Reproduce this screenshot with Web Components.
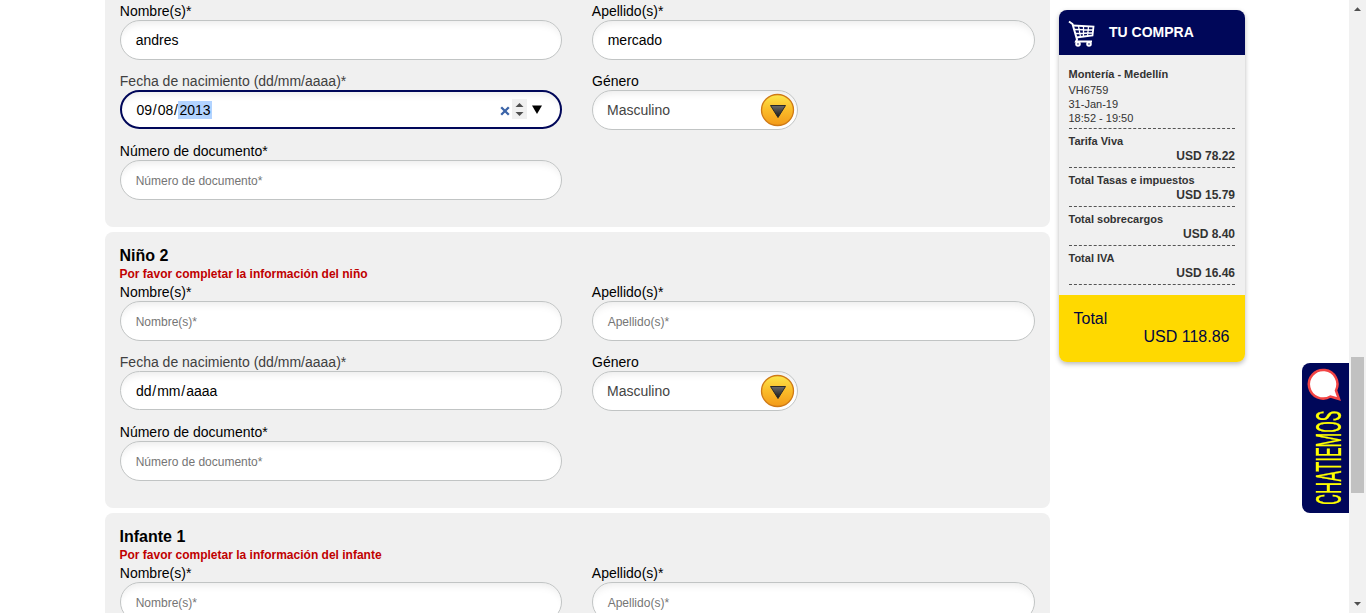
<!DOCTYPE html>
<html lang="es">
<head>
<meta charset="utf-8">
<title>Pasajeros</title>
<style>
html,body{margin:0;height:100%;overflow:hidden;background:#fff;font-family:"Liberation Sans",Arial,sans-serif;color:#000}
</style>
</head>
<body>
<booking-page></booking-page>
<script>
function define(name, html) {
  const tpl = document.createElement('template');
  tpl.innerHTML = html;
  customElements.define(name, class extends HTMLElement {
    constructor() {
      super();
      this.attachShadow({mode: 'open'}).appendChild(tpl.content.cloneNode(true));
    }
  });
}

define('form-field', `<style>
:host{display:block;height:70px;font-size:14px}
.label{padding-top:2px;height:18px;line-height:18px;white-space:nowrap;margin-left:-.2px}
.box{box-sizing:border-box;height:40px;border:1px solid #c1c4c4;border-radius:20px;background:#fff;box-shadow:inset 0 8px 8px -6px #e9e9e9;padding:0 14.7px;display:flex;align-items:center;font-size:14px;white-space:nowrap}
:host([hint]) .box{font-size:12px;color:#757575;padding-top:1px}
:host([date]) .box{height:39px;padding-bottom:0;padding-left:14px}
:host([date]) .label{color:#404040}
:host([focused]) .box{border:2px solid #000759;padding:0 13px 0 13.5px}
</style><div class="label"><slot name="label"></slot></div><div class="box"><slot></slot></div>`);

define('date-value', `<style>
:host{flex:1;display:flex;align-items:center;height:20px}
.t{flex:1;display:flex;align-items:center}
.t span{padding:0 .9px;line-height:18px}
.t .year{background:#b2d3ff;padding:0 1.4px}
svg{display:block}
.spin{background:#f0f0f0;margin:-2px 5px 0 2px}
.x{margin-top:2px}
.arrow{margin:-1px 5px 0 0}
</style><div class="t"><span>09</span>/<span>08</span>/<span class="year">2013</span></div>
<svg class="x" width="10" height="10" viewBox="0 0 10 10"><path d="M1.2 1.2L8.8 8.8M8.8 1.2L1.2 8.8" stroke="#3b64a8" stroke-width="2.3"/></svg>
<svg class="spin" width="15" height="20" viewBox="0 0 15 20"><path d="M3.5 8L7.5 4L11.5 8ZM3.5 13L7.5 17L11.5 13Z" fill="#505050"/></svg>
<svg class="arrow" width="10" height="9" viewBox="0 0 10 9"><path d="M0 .5H10L5 9Z" fill="#000"/></svg>`);

define('date-hint', `<style>
:host{display:flex}
span{padding:0 .9px}
span:first-child{padding-left:.3px}
</style><span>dd</span>/<span>mm</span>/<span>aaaa</span>`);

define('gender-select', `<style>
:host{display:block;height:70px;font-size:14px}
.label{padding-top:2px;height:18px;line-height:18px}
.box{box-sizing:border-box;width:206px;height:40px;border:1px solid #c1c4c4;border-radius:20px;background:#fff;box-shadow:inset 0 8px 8px -6px #e9e9e9;padding:0 2px 0 14px;display:flex;align-items:center;justify-content:space-between;color:#444}
svg{display:block}
</style><div class="label">Género</div><div class="box"><span><slot></slot></span>
<svg width="35" height="34" viewBox="0 0 35 34"><defs><linearGradient id="o" x2="0" y2="1"><stop stop-color="#fce64a"/><stop offset=".48" stop-color="#fbbd2a"/><stop offset="1" stop-color="#f39a18"/></linearGradient><linearGradient id="k" x2="0" y2="1"><stop stop-color="#6b6b6b"/><stop offset="1" stop-color="#151515"/></linearGradient></defs>
<ellipse cx="17.5" cy="17" rx="16" ry="15.5" fill="url(#o)" stroke="#cf7a16" stroke-width="1.3"/><path d="M10.500 12.500H25.500L18 24.500Z" fill="url(#k)" stroke="#292929"/></svg></div>`);

define('passenger-card', `<style>
:host{display:block;width:915px;padding:0 15px 17px;background:#f0f0f0;border-radius:8px}
:host([continued]){border-radius:0 0 8px 8px}
header{height:34px;padding-top:15px;margin-left:-.5px}
:host([continued]) header{display:none}
h3{font-size:16px;line-height:18px;margin:0}
p{margin:0;font-size:12px;font-weight:bold;line-height:18px;color:#c00000}
.fields{display:grid;grid-template-columns:442px 443px;column-gap:30px}
</style><header><h3><slot name="title"></slot></h3><p><slot name="error"></slot></p></header><div class="fields"><slot></slot></div>`);

define('price-row', `<style>
:host{display:block;height:38px;border-bottom:1px dashed #555;font-weight:bold;color:#333}
.n{font-size:11px;line-height:14px;padding-top:5px}
.v{font-size:12px;line-height:14px;text-align:right;padding-top:1px}
</style><div class="n"><slot></slot></div><div class="v"><slot name="amount"></slot></div>`);

define('purchase-summary', `<style>
:host{display:block;width:186px;height:352px;border-radius:8px;overflow:hidden;background:#f0f0f0;box-shadow:0 2px 5px rgba(0,0,0,.28);color:#333}
header{height:45px;background:#000759;color:#fff;display:flex;align-items:center;font-size:14px;font-weight:bold}
header svg{margin:3px 13px 0 9px}
header span{padding-bottom:1px}
.body{height:230px;padding:10px 10px 0 9.5px}
.flight{height:63px;border-bottom:1px dashed #555;font-size:11px;line-height:14px}
.flight b{display:block;line-height:18px}
.total{padding:15px 15.5px 0 14.5px;background:#ffd900;color:#000640;font-size:16px;line-height:18px;height:52px}
.total div+div{text-align:right}
</style><header><svg width="28" height="28" viewBox="0 0 28 28" fill="none" stroke="#fff"><path d="M1 1.500L4.500 4L9 19.500L8 21.500H24" stroke-width="2"/><path d="M5 5.500L25.500 6.500L24.500 15.500L8 17.500" stroke-width="1.800"/><path d="M10.500 6L12.500 17M15.500 6V16.500M20.500 6.500L19.500 16.500M6.500 9.500L25 10M7.500 13.500L24.500 13" stroke-width="1.300"/><circle cx="10" cy="24" r="1.800" stroke-width="2"/><circle cx="21" cy="24" r="1.800" stroke-width="2"/></svg><span>TU COMPRA</span></header>
<div class="body"><div class="flight"><b>Montería - Medellín</b><div>VH6759</div><div>31-Jan-19</div><div>18:52 - 19:50</div></div>
<price-row>Tarifa Viva<span slot="amount">USD 78.22</span></price-row>
<price-row>Total Tasas e impuestos<span slot="amount">USD 15.79</span></price-row>
<price-row>Total sobrecargos<span slot="amount">USD 8.40</span></price-row>
<price-row>Total IVA<span slot="amount">USD 16.46</span></price-row></div>
<div class="total"><div>Total</div><div>USD 118.86</div></div>`);

define('chat-tab', `<style>
:host{display:block;width:47px;height:150px;background:#000759;border-radius:8px 0 0 8px}
svg{display:block;overflow:visible}
text{font-family:Roboto,sans-serif;font-weight:400}
</style><svg width="47" height="150" viewBox="0 0 47 150"><path d="M37 36L28.500 33.500A14.300 14.300 0 1 1 34 27.500Z" fill="#fff" stroke="#f24545" stroke-width="2.500"/><text transform="translate(38.500 142) rotate(-90)" font-size="35" textLength="94" lengthAdjust="spacingAndGlyphs" fill="#ff0" stroke="#ff0" stroke-width=".3">CHATIEMOS</text></svg>`);

define('page-scrollbar', `<style>
:host{width:17px;height:613px;background:#f1f1f1;display:flex;flex-direction:column;align-items:center}
svg{display:block}
.thumb{width:13px;height:136px;background:#c1c1c1;margin:340px 0 103px}
</style><svg width="17" height="17" viewBox="0 0 17 17"><path d="M5 11L8.500 7.200L12 11Z" fill="#505050"/></svg><div class="thumb"></div><svg width="17" height="17" viewBox="0 0 17 17"><path d="M5 6L8.500 9.800L12 6Z" fill="#505050"/></svg>`);

define('booking-page', `<style>
:host{display:flex;height:613px;overflow:hidden}
main{flex:none;width:945px;margin-left:105px;display:flex;flex-direction:column;gap:5px}
purchase-summary{margin:10px 0 0 9px;flex:none}
chat-tab{position:fixed;right:17px;top:363px}
page-scrollbar{margin-left:auto}
</style><main>
<passenger-card continued>
<form-field><span slot="label">Nombre(s)*</span>andres</form-field>
<form-field><span slot="label">Apellido(s)*</span>mercado</form-field>
<form-field date focused><span slot="label">Fecha de nacimiento (dd/mm/aaaa)*</span><date-value></date-value></form-field>
<gender-select>Masculino</gender-select>
<form-field hint><span slot="label">Número de documento*</span>Número de documento*</form-field>
</passenger-card>
<passenger-card>
<span slot="title">Niño 2</span><span slot="error">Por favor completar la información del niño</span>
<form-field hint><span slot="label">Nombre(s)*</span>Nombre(s)*</form-field>
<form-field hint><span slot="label">Apellido(s)*</span>Apellido(s)*</form-field>
<form-field date><span slot="label">Fecha de nacimiento (dd/mm/aaaa)*</span><date-hint></date-hint></form-field>
<gender-select>Masculino</gender-select>
<form-field hint><span slot="label">Número de documento*</span>Número de documento*</form-field>
</passenger-card>
<passenger-card>
<span slot="title">Infante 1</span><span slot="error">Por favor completar la información del infante</span>
<form-field hint><span slot="label">Nombre(s)*</span>Nombre(s)*</form-field>
<form-field hint><span slot="label">Apellido(s)*</span>Apellido(s)*</form-field>
</passenger-card>
</main>
<purchase-summary></purchase-summary>
<chat-tab></chat-tab>
<page-scrollbar></page-scrollbar>`);
</script>
</body>
</html>
